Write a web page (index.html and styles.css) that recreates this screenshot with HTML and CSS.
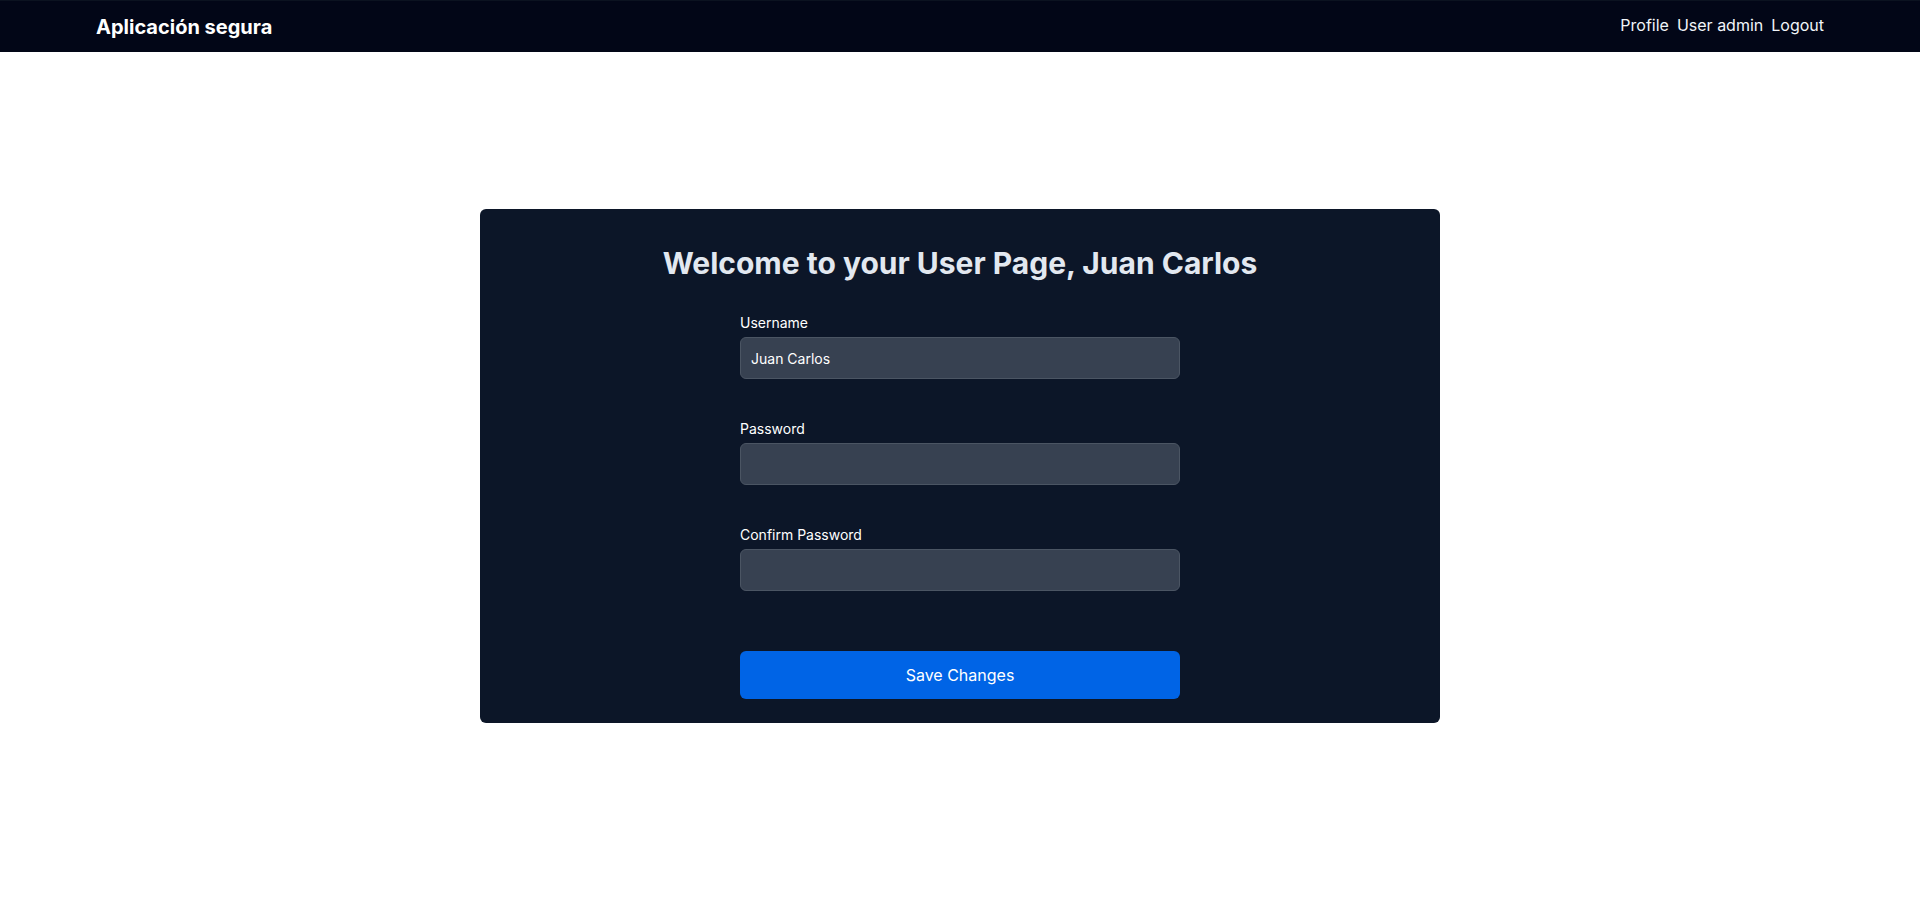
FILE: index.html
```html
<!DOCTYPE html>
<html lang="es">
<head>
<meta charset="utf-8">
<title>Aplicación segura</title>
<link rel="stylesheet" href="styles.css">
</head>
<body>
<header class="navbar">
  <div class="brand">Aplicación segura</div>
  <nav class="nav-links">
    <a href="#" class="nav-link">Profile</a>
    <a href="#" class="nav-link">User admin</a>
    <a href="#" class="nav-link">Logout</a>
  </nav>
</header>
<main class="page">
  <section class="card">
    <h1 class="card-title">Welcome to your User Page, Juan Carlos</h1>
    <form class="form">
      <div class="field">
        <label class="label" for="username">Username</label>
        <input class="input" id="username" type="text" value="Juan Carlos">
      </div>
      <div class="field">
        <label class="label" for="password">Password</label>
        <input class="input" id="password" type="password">
      </div>
      <div class="field">
        <label class="label" for="confirm">Confirm Password</label>
        <input class="input" id="confirm" type="password">
      </div>
      <button class="btn" type="button">Save Changes</button>
    </form>
  </section>
</main>
</body>
</html>
```

FILE: styles.css
```css
* { box-sizing: border-box; }
html, body {
  margin: 0;
  padding: 0;
  background: #ffffff;
  font-family: Inter, "Noto Sans", "Liberation Sans", sans-serif;
}
.navbar {
  height: 52px;
  background: #020617;
  border-top: 1px solid #0b1220;
  display: flex;
  align-items: center;
  justify-content: space-between;
  padding: 0 96px 0 96px;
}
.brand {
  color: #ffffff;
  font-size: 20px;
  line-height: 28px;
  font-weight: 700;
}
.nav-links {
  display: flex;
  gap: 8px;
  margin-top: -3px;
}
.nav-link {
  color: #f1f5f9;
  text-decoration: none;
  font-size: 16px;
  line-height: 24px;
}
.page {
  display: flex;
  justify-content: center;
  padding-top: 157px;
}
.card {
  width: 960px;
  background: #0c1628;
  border-radius: 6px;
  padding: 36px 24px 24px;
  display: flex;
  flex-direction: column;
  align-items: center;
}
.card-title {
  margin: 0;
  color: #e2e8f0;
  font-size: 30px;
  line-height: 36px;
  font-weight: 700;
  text-align: center;
}
.form {
  width: 440px;
  margin-top: 32px;
  display: flex;
  flex-direction: column;
}
.field {
  display: flex;
  flex-direction: column;
  margin-bottom: 40px;
}
.field:last-of-type { margin-bottom: 60px; }
.label {
  color: #ffffff;
  font-size: 14px;
  line-height: 20px;
  margin-bottom: 4px;
}
.input {
  height: 42px;
  padding: 10px;
  background: #374151;
  border: 1px solid #4b5563;
  border-radius: 6px;
  color: #ffffff;
  font-family: inherit;
  font-size: 14px;
  line-height: 20px;
  outline: none;
}
.btn {
  height: 48px;
  background: #0064e6;
  color: #ffffff;
  border: none;
  border-radius: 6px;
  font-family: inherit;
  font-size: 16px;
  line-height: 24px;
  cursor: pointer;
}
```
